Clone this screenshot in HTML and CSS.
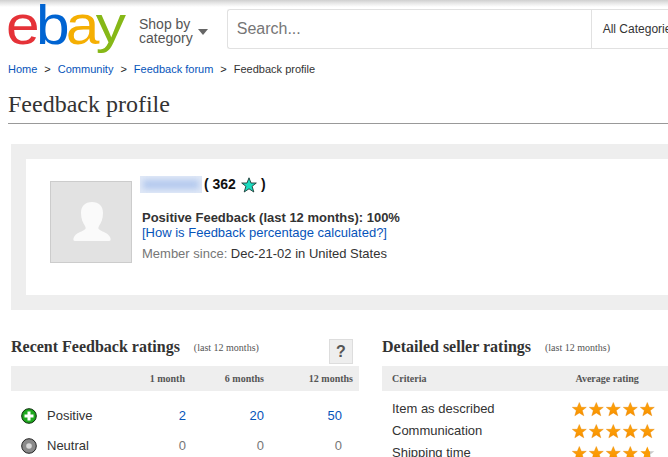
FILE: index.html
```html
<!DOCTYPE html>
<html lang="en">
<head>
<meta charset="utf-8">
<title>Feedback profile</title>
<link rel="stylesheet" href="styles.css">
</head>
<body>
<header class="top">
  <div class="logo"><span class="l-e">e</span><span class="l-b">b</span><span class="l-a">a</span><span class="l-y">y</span></div>
  <div class="shop">Shop by<br>category</div>
  <span class="caret"></span>
  <div class="search">
    <div class="search-input">Search...</div>
    <div class="search-cat">All Categories</div>
  </div>
</header>
<nav class="crumbs">
  <a href="#">Home</a><b>&gt;</b><a href="#">Community</a><b>&gt;</b><a href="#">Feedback forum</a><b>&gt;</b><span>Feedback profile</span>
</nav>
<h1 class="title">Feedback profile</h1>
<section class="panel">
  <div class="card">
    <div class="avatar">
      <svg width="80" height="80" viewBox="0 0 80 80"><path fill="#fafafa" d="M41 20c-7 0-11 4-11 11 0 6 2 10 4 13 1 2 1 3-1 4-3 2-8 3-10 7-1 2-1 4 1 4h34c2 0 2-2 1-4-2-4-7-5-10-7-2-1-2-2-1-4 2-3 4-7 4-13 0-7-4-11-11-11z"/></svg>
    </div>
    <div class="info">
      <div class="who"><span class="blur"><i></i></span><span class="score">( 362</span>
        <svg class="tstar" width="16" height="16" viewBox="0 0 16 16"><path fill="#1bdcc0" stroke="#1d3a36" stroke-width=".9" d="M8 .8l2 5.200h5.300l-4.200 3.300 1.700 5.700L8 11.800 3.200 15l1.700-5.700L.7 6H6z"/></svg>
        <span class="score">)</span></div>
      <div class="pos">Positive Feedback (last 12 months): 100%</div>
      <a class="how" href="#">[How is Feedback percentage calculated?]</a>
      <div class="since"><span>Member since:</span> Dec-21-02 in United States</div>
    </div>
  </div>
</section>
<div class="cols">
  <section class="left">
    <div class="sec-head">
      <h2>Recent Feedback ratings</h2><small>(last 12 months)</small>
      <span class="help">?</span>
    </div>
    <div class="grid thead">
      <span></span><span>1 month</span><span>6 months</span><span>12 months</span>
    </div>
    <div class="grid row first">
      <span class="kind"><svg width="16" height="16" viewBox="0 0 16 16"><circle cx="8" cy="8" r="7.300" fill="#1ea81e" stroke="#0b2a0b"/><path fill="#fff" d="M6.500 3.500h3v3h3v3h-3v3h-3v-3h-3v-3h3z"/></svg>Positive</span>
      <a href="#" class="n1">2</a><a href="#" class="n2">20</a><a href="#" class="n3">50</a>
    </div>
    <div class="grid row">
      <span class="kind"><svg width="16" height="16" viewBox="0 0 16 16"><circle cx="8" cy="8" r="7.300" fill="#8a8a8a" stroke="#222"/><circle cx="8" cy="8" r="2.800" fill="#d8d8d8"/></svg>Neutral</span>
      <span class="n1 zero">0</span><span class="n2 zero">0</span><span class="n3 zero">0</span>
    </div>
  </section>
  <section class="right">
    <div class="sec-head">
      <h2>Detailed seller ratings</h2><small>(last 12 months)</small>
    </div>
    <div class="dhead"><span>Criteria</span><span class="avg">Average rating</span></div>
    <div class="drow"><span class="crit">Item as described</span>
      <svg class="stars" width="85" height="16" viewBox="0 0 85 16"><use href="#st" x="0"/><use href="#st" x="17"/><use href="#st" x="34"/><use href="#st" x="51"/><use href="#st" x="68"/></svg></div>
    <div class="drow"><span class="crit">Communication</span>
      <svg class="stars" width="85" height="16" viewBox="0 0 85 16"><use href="#st" x="0"/><use href="#st" x="17"/><use href="#st" x="34"/><use href="#st" x="51"/><use href="#st" x="68"/></svg></div>
    <div class="drow"><span class="crit">Shipping time</span>
      <svg class="stars" width="85" height="16" viewBox="0 0 85 16"><use href="#st" x="0"/><use href="#st" x="17"/><use href="#st" x="34"/><use href="#st" x="51"/><use href="#stp" x="68"/></svg></div>
  </section>
</div>
<svg class="defs" width="0" height="0"><defs>
  <linearGradient id="og" x1="0" y1="0" x2="0" y2="1"><stop offset="0" stop-color="#ffa50a"/><stop offset="1" stop-color="#f79000"/></linearGradient>
  <linearGradient id="pg" x1="0" y1="0" x2="1" y2="0"><stop offset=".72" stop-color="#fa9b05"/><stop offset=".72" stop-color="#c9c9c9"/></linearGradient>
  <path id="st" fill="url(#og)" stroke="#e58400" stroke-width=".4" d="M7.300 .5l2 4.800h5l-4 3.200 1.500 5.300-4.500-2.900-4.500 2.900 1.500-5.300-4-3.200h5z"/>
  <path id="stp" fill="url(#pg)" d="M7.300 .5l2 4.800h5l-4 3.200 1.500 5.300-4.500-2.900-4.500 2.900 1.500-5.300-4-3.200h5z"/>
</defs></svg>
</body>
</html>
```
FILE: styles.css
```css
html, body { margin: 0; padding: 0; background: #fff; }
body {
  width: 668px;
  height: 457px;
  overflow: hidden;
  font-family: "Liberation Sans", Arial, sans-serif;
  font-size: 13px;
  color: #333;
  position: relative;
}
a { color: #0654ba; text-decoration: none; }

.top {
  display: flex;
  align-items: flex-start;
  height: 60px;
  padding: 0 0 0 7px;
  box-sizing: border-box;
  background: linear-gradient(#d0d0d0 0, #e6e6e6 3px, #fff 7px);
}
.logo {
  width: 133px;
  margin-left: -1px;
  flex: none;
  font-size: 55px;
  line-height: 50px;
  height: 50px;
  letter-spacing: -3.400px;
  white-space: nowrap;
  transform: scaleX(1.1);
  transform-origin: left center;
}
.l-e { color: #e53238; }
.l-b { color: #0064d2; }
.l-a { color: #f5af02; }
.l-y {
  color: #86b817;
  display: inline-block;
  transform: scaleY(.93);
  transform-origin: 0 16px;
}
.shop {
  flex: none;
  margin-top: 17px;
  font-size: 14px;
  line-height: 14px;
  color: #555;
}
.caret {
  flex: none;
  margin: 29px 0 0 5px;
  border-left: 5.500px solid transparent;
  border-right: 5.500px solid transparent;
  border-top: 6px solid #666;
}
.search {
  flex: none;
  display: flex;
  width: 460px;
  height: 40px;
  margin: 9px 0 0 19px;
  box-sizing: border-box;
  border: 1px solid #e1e1e1;
  border-right: 0;
  border-radius: 3px 0 0 3px;
  background: #fff;
}
.search-input {
  width: 354px;
  padding-left: 9px;
  flex: none;
  font-size: 16px;
  line-height: 38px;
  color: #767676;
  border-right: 1px solid #e1e1e1;
  box-sizing: content-box;
}
.search-cat {
  padding-left: 11px;
  font-size: 12px;
  line-height: 38px;
  white-space: nowrap;
  color: #333;
}

.crumbs {
  padding: 3px 0 0 8px;
  height: 13px;
  font-size: 11px;
  line-height: 13px;
  white-space: nowrap;
}
.crumbs b { font-weight: normal; margin: 0 7px; color: #222; }
.crumbs span { color: #333; }

.title {
  margin: 13px 0 0 8px;
  padding-bottom: 3px;
  height: 31px;
  font-family: "Liberation Serif", "Times New Roman", serif;
  font-weight: normal;
  font-size: 24px;
  line-height: 31px;
  color: #333;
  border-bottom: 1px solid #999;
}

.panel {
  margin: 20px 0 0 11px;
  height: 136px;
  padding: 15px;
  background: #eee;
}
.card {
  display: flex;
  height: 136px;
  box-sizing: border-box;
  width: 700px;
  padding: 22px 0 0 24px;
  background: #fff;
}
.avatar {
  flex: none;
  width: 80px;
  height: 80px;
  border: 1px solid #ccc;
  background: #e2e2e2;
}
.avatar svg { display: block; }
.info { margin: -7px 0 0 10px; }
.who {
  display: flex;
  align-items: center;
  height: 20px;
  margin-left: -2px;
}
.blur {
  display: block;
  width: 62px;
  height: 17px;
  background: #e1e9f7;
  overflow: hidden;
}
.blur i {
  display: block;
  height: 9px;
  margin: 4px 3px;
  background: #b2c8ee;
  filter: blur(3px);
}
.score { font-size: 14px; font-weight: bold; color: #111; margin-left: 2px; }
.tstar { margin: 1px 2px 0 5px; }
.pos { margin-top: 16px; font-weight: bold; line-height: 15px; }
.how { display: block; line-height: 15px; }
.since { margin-top: 6px; line-height: 15px; color: #333; }
.since span { color: #767676; }

.cols {
  display: flex;
  margin: 27px 0 0 11px;
}
.left { width: 348px; flex: none; margin-right: 23px; }
.right { width: 300px; flex: none; }
.sec-head {
  position: relative;
  height: 29px;
  display: flex;
  align-items: flex-start;
}
.sec-head h2 {
  margin: 0;
  font-family: "Liberation Serif", "Times New Roman", serif;
  font-size: 16px;
  line-height: 20px;
  font-weight: bold;
  color: #333;
}
.sec-head small {
  margin: 5px 0 0 14px;
  font-family: "Liberation Serif", "Times New Roman", serif;
  font-size: 10px;
  line-height: 12px;
  color: #555;
}
.help {
  position: absolute;
  left: 318px;
  top: 2px;
  width: 22px;
  height: 23px;
  border: 1px solid #ddd;
  background: #eee;
  font-weight: bold;
  font-size: 16px;
  line-height: 24px;
  text-align: center;
  color: #555;
}
.grid {
  display: grid;
  grid-template-columns: 125px 49px 79px 89px;
  column-gap: 0;
}
.thead {
  height: 25px;
  padding-right: 6px;
  background: #eee;
  font-family: "Liberation Serif", "Times New Roman", serif;
  font-size: 10px;
  font-weight: bold;
  line-height: 25px;
  color: #555;
  text-align: right;
}
.row { height: 30px; line-height: 30px; text-align: right; padding-right: 6px; }
.row.first { margin-top: 10px; }
.kind { display: flex; align-items: center; text-align: left; padding-left: 10px; color: #333; }
.kind svg { margin-right: 10px; flex: none; }
.n1 { margin-right: -1px; }
.n3 { padding-right: 11px; }
.zero { color: #767676; }
.dhead {
  display: flex;
  height: 25px;
  padding-left: 10px;
  background: #eee;
  font-family: "Liberation Serif", "Times New Roman", serif;
  font-size: 10px;
  font-weight: bold;
  line-height: 25px;
  color: #555;
}
.avg { margin-left: 149px; }
.drow {
  display: flex;
  align-items: center;
  height: 22px;
  padding-left: 10px;
  line-height: 22px;
}
.dhead + .drow { margin-top: 7px; }
.crit { width: 180px; flex: none; }
.stars { flex: none; margin-top: 1px; }
.defs { position: absolute; }
```
